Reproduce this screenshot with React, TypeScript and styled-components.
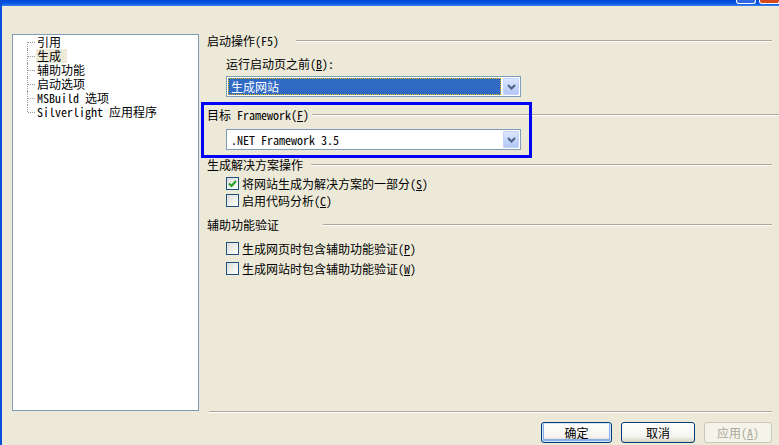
import React from "react";
import styled, { createGlobalStyle, css } from "styled-components";

const GlobalStyle = createGlobalStyle`
  html, body {
    margin: 0;
    padding: 0;
    background: #ECE9D8;
  }
  * {
    box-sizing: border-box;
  }
`;

const FONT = `"Noto Sans Mono CJK SC", "Noto Sans CJK SC", "DejaVu Sans Mono", monospace`;

const treeItems = ["引用", "生成", "辅助功能", "启动选项", "MSBuild 选项", "Silverlight 应用程序"];

const Check = () => (
    <svg width="9" height="8" viewBox="0 0 9 8">
        <path d="M1 3.5 L3.5 6 L8 1" fill="none" stroke="#21A121" strokeWidth="2" />
    </svg>
);

const Chevron = () => (
    <svg width="9" height="6" viewBox="0 0 9 6">
        <polyline points="1,1 4.5,4.5 8,1" fill="none" stroke="#4D6185" strokeWidth="2" />
    </svg>
);

const Key = ({ k }: { k: string }) => (
    <>(<u>{k}</u>)</>
);

const CheckRow = ({ checked, top, children }: { checked?: boolean; top: number; children: React.ReactNode }) => (
    <Row $top={top}>
        <Box>{checked && <Check />}</Box>
        <RowLabel>{children}</RowLabel>
    </Row>
);

const App = () => {
    return (
        <>
            <GlobalStyle />
            <Window>
                <TitleBar>
                    <CaptionButton $kind="min" />
                    <CaptionButton $kind="close" />
                </TitleBar>
                <Body>
                    <Tree>
                        {treeItems.map((t, i) => (
                            <TreeItem key={t} $first={i === 0} $last={i === treeItems.length - 1}>
                                <TreeText $selected={t === "生成"}>{t}</TreeText>
                            </TreeItem>
                        ))}
                    </Tree>
                    <Settings>
                        <Highlight />
                        <Header>
                            <span>启动操作(F5)</span>
                            <Rule $gap={17} />
                        </Header>
                        <Caption>
                            运行启动页之前<Key k="B" />:
                        </Caption>
                        <Select $top={5}>
                            <SelectValue $selected>生成网站</SelectValue>
                            <DropButton><Chevron /></DropButton>
                        </Select>
                        <Header $top={11}>
                            <span>目标 Framework<Key k="F" /></span>
                            <Rule $gap={3} $bleed />
                        </Header>
                        <Select $top={7}>
                            <SelectValue>.NET Framework 3.5</SelectValue>
                            <DropButton><Chevron /></DropButton>
                        </Select>
                        <Header $top={8}>
                            <span>生成解决方案操作</span>
                            <Rule $gap={8} />
                        </Header>
                        <CheckRow checked top={5}>将网站生成为解决方案的一部分<Key k="S" /></CheckRow>
                        <CheckRow top={4}>启用代码分析<Key k="C" /></CheckRow>
                        <Header $top={11}>
                            <span>辅助功能验证</span>
                            <Rule $gap={44} />
                        </Header>
                        <CheckRow top={10}>生成网页时包含辅助功能验证<Key k="P" /></CheckRow>
                        <CheckRow top={7}>生成网站时包含辅助功能验证<Key k="W" /></CheckRow>
                        <Separator />
                    </Settings>
                </Body>
                <ButtonBar>
                    <DialogButton $width={71} $default>确定</DialogButton>
                    <DialogButton $width={74}>取消</DialogButton>
                    <DialogButton $width={68} disabled>应用<Key k="A" /></DialogButton>
                </ButtonBar>
            </Window>
        </>
    );
};

export default App;

const Window = styled.div`
    width: 779px;
    height: 445px;
    background: #ECE9D8;
    border-left: 2px solid #0A4FDA;
    display: flex;
    flex-direction: column;
    overflow: hidden;
    font-family: ${FONT};
    font-size: 12px;
    color: #000;
`;

const TitleBar = styled.div`
    height: 6px;
    background: linear-gradient(#0047D4, #0A5AE6 60%, #3B82F2);
    display: flex;
    justify-content: flex-end;
    align-items: flex-start;
    gap: 3px;
    margin-left: -2px;
`;

const CaptionButton = styled.div<{ $kind: "min" | "close" }>`
    width: ${p => (p.$kind === "close" ? 21 : 20)}px;
    height: 4px;
    border: 1px solid #fff;
    border-top: none;
    border-radius: 0 0 3px 3px;
    margin-right: ${p => (p.$kind === "close" ? -1 : 0)}px;
    background: ${p => (p.$kind === "close" ? "#D8491F" : "#3068E6")};
`;

const Body = styled.div`
    display: flex;
    padding: 28px 0 0 10px;
    gap: 8px;
`;

const Tree = styled.div`
    width: 187px;
    height: 377px;
    border: 1px solid #7F9DB9;
    background: #fff;
    padding-top: 0;
`;

const TreeItem = styled.div<{ $first: boolean; $last: boolean }>`
    position: relative;
    height: 14px;
    line-height: 14px;
    padding-left: 23px;
    white-space: nowrap;

    &::before {
        content: "";
        position: absolute;
        left: 14px;
        top: ${p => (p.$first ? 7 : 0)}px;
        bottom: ${p => (p.$last ? 7 : 0)}px;
        border-left: 1px dotted #9A9A9A;
    }

    &::after {
        content: "";
        position: absolute;
        left: 15px;
        top: 7px;
        width: 7px;
        border-top: 1px dotted #9A9A9A;
    }
`;

const TreeText = styled.span<{ $selected?: boolean }>`
    display: inline-block;
    height: 14px;
    padding: 0 6px 0 1px;
    ${p => p.$selected && css`
        background: #ECE9D8;
    `}
`;

const Settings = styled.div`
    position: relative;
    flex: 1;
    height: 379px;
    display: flex;
    flex-direction: column;
    padding-right: 7px;
`;

const Highlight = styled.div`
    position: absolute;
    left: -6px;
    top: 68px;
    width: 331px;
    height: 56px;
    border: 3px solid #0000F4;
    pointer-events: none;
`;

const Header = styled.div<{ $top?: number }>`
    display: flex;
    align-items: center;
    height: 14px;
    line-height: 14px;
    margin-top: ${p => p.$top ?? 0}px;
    white-space: nowrap;
`;

const Rule = styled.div<{ $gap: number; $bleed?: boolean }>`
    flex: 1;
    height: 2px;
    margin-left: ${p => p.$gap}px;
    margin-right: ${p => (p.$bleed ? -7 : 0)}px;
    border-top: 1px solid #ACA899;
    border-bottom: 1px solid #fff;
`;

const Caption = styled.div`
    height: 14px;
    line-height: 14px;
    margin: 9px 0 0 19px;
    white-space: nowrap;
`;

const Select = styled.div<{ $top: number }>`
    width: 295px;
    height: 21px;
    margin: ${p => p.$top}px 0 0 19px;
    border: 1px solid #7F9DB9;
    background: #fff;
    display: flex;
    align-items: center;
    padding: 1px;
`;

const SelectValue = styled.div<{ $selected?: boolean }>`
    flex: 1;
    height: 17px;
    line-height: 15px;
    padding-left: 2px;
    margin-right: 2px;
    white-space: nowrap;
    border: 1px solid transparent;
    ${p => p.$selected && css`
        background: #316AC5;
        color: #fff;
        border: 1px dotted #E8C000;
    `}
`;

const DropButton = styled.div`
    width: 16px;
    height: 17px;
    border: 1px solid #C3D3FD;
    border-radius: 1px;
    background: linear-gradient(#DCE6FE, #C1D3FB 60%, #B4C8F6);
    display: flex;
    align-items: center;
    justify-content: center;
`;

const Row = styled.div<{ $top: number }>`
    display: flex;
    align-items: center;
    height: 13px;
    margin: ${p => p.$top}px 0 0 19px;
    white-space: nowrap;
`;

const Box = styled.div`
    width: 13px;
    height: 13px;
    border: 1px solid #1C5180;
    background: linear-gradient(135deg, #DCDCD7, #FFFFFF);
    display: flex;
    align-items: center;
    justify-content: center;
`;

const RowLabel = styled.span`
    margin-left: 3px;
    line-height: 14px;
`;

const Separator = styled.div`
    margin: auto 0 0 2px;
    height: 2px;
    border-top: 1px solid #ACA899;
    border-bottom: 1px solid #fff;
`;

const ButtonBar = styled.div`
    display: flex;
    justify-content: flex-end;
    gap: 9px;
    margin-top: 9px;
    padding-right: 7px;
`;

const DialogButton = styled.button<{ $width: number; $default?: boolean }>`
    width: ${p => p.$width}px;
    height: 21px;
    padding: 0;
    font-family: ${FONT};
    font-size: 12px;
    color: #000;
    border: 1px solid #003C74;
    border-radius: 3px;
    background: linear-gradient(#FFFFFF, #F4F4F0 70%, #D8D2C6);
    ${p => p.$default && css`
        box-shadow: inset 0 0 0 1px #CEE7FF, inset 0 -1px 0 2px #89ADE4;
    `}

    &:disabled {
        color: #ACA899;
        border-color: #C9C7BA;
        background: #F5F4EA;
    }
`;
